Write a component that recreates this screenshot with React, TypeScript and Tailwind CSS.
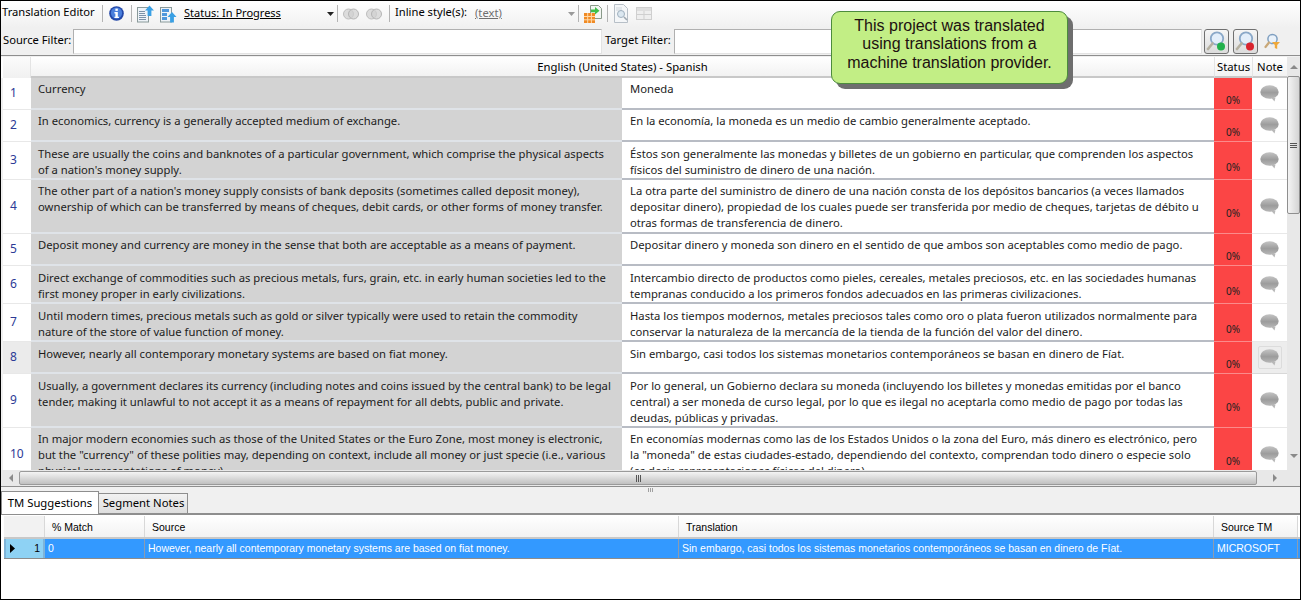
const font = "font-['Noto_Sans','Open_Sans',sans-serif]"

const rows = [
  { n: 1, h: "h-[32px]", pad: "pt-[3px]", source: ["Currency"], target: ["Moneda"] },
  { n: 2, h: "h-[32px]", pad: "pt-[3px]", source: ["In economics, currency is a generally accepted medium of exchange."], target: ["En la economía, la moneda es un medio de cambio generalmente aceptado."] },
  { n: 3, h: "h-[38px]", pad: "pt-[4px]", source: ["These are usually the coins and banknotes of a particular government, which comprise the physical aspects", "of a nation's money supply."], target: ["Éstos son generalmente las monedas y billetes de un gobierno en particular, que comprenden los aspectos", "físicos del suministro de dinero de una nación."] },
  { n: 4, h: "h-[54px]", pad: "pt-[3px]", source: ["The other part of a nation's money supply consists of bank deposits (sometimes called deposit money),", "ownership of which can be transferred by means of cheques, debit cards, or other forms of money transfer."], target: ["La otra parte del suministro de dinero de una nación consta de los depósitos bancarios (a veces llamados", "depositar dinero), propiedad de los cuales puede ser transferida por medio de cheques, tarjetas de débito u", "otras formas de transferencia de dinero."] },
  { n: 5, h: "h-[32px]", pad: "pt-[3px]", source: ["Deposit money and currency are money in the sense that both are acceptable as a means of payment."], target: ["Depositar dinero y moneda son dinero en el sentido de que ambos son aceptables como medio de pago."] },
  { n: 6, h: "h-[38px]", pad: "pt-[4px]", source: ["Direct exchange of commodities such as precious metals, furs, grain, etc. in early human societies led to the", "first money proper in early civilizations."], target: ["Intercambio directo de productos como pieles, cereales, metales preciosos, etc. en las sociedades humanas", "tempranas conducido a los primeros fondos adecuados en las primeras civilizaciones."] },
  { n: 7, h: "h-[38px]", pad: "pt-[4px]", source: ["Until modern times, precious metals such as gold or silver typically were used to retain the commodity", "nature of the store of value function of money."], target: ["Hasta los tiempos modernos, metales preciosos tales como oro o plata fueron utilizados normalmente para", "conservar la naturaleza de la mercancía de la tienda de la función del valor del dinero."] },
  { n: 8, h: "h-[32px]", pad: "pt-[4px]", source: ["However, nearly all contemporary monetary systems are based on fiat money."], target: ["Sin embargo, casi todos los sistemas monetarios contemporáneos se basan en dinero de Fíat."] },
  { n: 9, h: "h-[54px]", pad: "pt-[4px]", source: ["Usually, a government declares its currency (including notes and coins issued by the central bank) to be legal", "tender, making it unlawful to not accept it as a means of repayment for all debts, public and private."], target: ["Por lo general, un Gobierno declara su moneda (incluyendo los billetes y monedas emitidas por el banco", "central) a ser moneda de curso legal, por lo que es ilegal no aceptarla como medio de pago por todas las", "deudas, públicas y privadas."] },
  { n: 10, h: "h-[54px]", pad: "pt-[3px]", source: ["In major modern economies such as those of the United States or the Euro Zone, most money is electronic,", "but the \"currency\" of these polities may, depending on context, include all money or just specie (i.e., various", "physical representations of money)."], target: ["En economías modernas como las de los Estados Unidos o la zona del Euro, más dinero es electrónico, pero", "la \"moneda\" de estas ciudades-estado, dependiendo del contexto, comprendan todo dinero o especie solo", "(es decir, representaciones físicas del dinero)."] },
]

function InfoIcon() {
  return (
    <svg width="15" height="15" viewBox="0 0 16 16">
      <circle cx="8" cy="8" r="7.8" fill="#2448a8" />
      <circle cx="8" cy="7.5" r="6" fill="#4a7fdc" />
      <rect x="6.8" y="2.800" width="2.600" height="2.400" fill="#fff" />
      <path d="M5.800 6.500h3.600v5h1.200v1.400H5.800v-1.400h1v-3.600h-1z" fill="#fff" />
    </svg>
  )
}

function DocUpIcon({ blocks }: { blocks?: boolean }) {
  return (
    <svg width="17" height="18" viewBox="0 0 17 18">
      <rect x="0.5" y="2.500" width="11" height="14.500" fill="#eef3f8" stroke="#8a9a9a" />
      {blocks ? (
        <>
          <rect x="2" y="4" width="7" height="3" fill="#4f97dc" />
          <rect x="2" y="8" width="5" height="3" fill="#4f97dc" />
          <rect x="2" y="12" width="5" height="3" fill="#4f97dc" />
        </>
      ) : (
        <path d="M2 6.500h6M2 8.500h6M2 10.500h7M2 12.500h7M2 14.500h7" stroke="#7d93a8" />
      )}
      <path d="M12.500 0.500l4.500 5h-2.600v5.500h-3.800V5.500H8z" transform={blocks ? "translate(-.5 6.500)" : undefined} fill="#3aa0e4" />
    </svg>
  )
}

function RingsIcon() {
  return (
    <svg width="16" height="12" viewBox="0 0 16 12">
      <circle cx="5.500" cy="6" r="5" fill="#dcdcdc" stroke="#bdbdbd" />
      <circle cx="10.500" cy="6" r="5" fill="#d0d0d0" fillOpacity="0.7" stroke="#b5b5b5" />
    </svg>
  )
}

function ExportIcon() {
  return (
    <svg width="18" height="18" viewBox="0 0 18 18">
      <path d="M6.500 0.500h8l3 3v10h-11z" fill="#f3f6f3" stroke="#8a9a8a" />
      <rect x="0" y="8" width="11" height="10" fill="#f08a24" />
      <path d="M0 11.500h11M0 14.800h11M3.700 8v10M7.400 8v10" stroke="#ffd9a8" />
      <path d="M7 4.500h4V2l4.500 3.800L11 9.500V7.200H7z" fill="#3fbf4a" />
    </svg>
  )
}

function PreviewIcon() {
  return (
    <svg width="15" height="19" viewBox="0 0 15 19">
      <path d="M0.500 0.500h9l4 4v14h-13z" fill="#f4f6f8" stroke="#b7bfc7" />
      <path d="M2 4h6M2 6h6" stroke="#cfd6dc" />
      <circle cx="7" cy="10" r="3.500" fill="#dbe7f0" stroke="#9fb0be" />
      <path d="M10 13l3 3" stroke="#9fa8b0" strokeWidth="1.600" />
    </svg>
  )
}

function GridIcon() {
  return (
    <svg width="16" height="14" viewBox="0 0 16 14">
      <rect x="0.500" y="0.500" width="15" height="12" fill="#eeeeee" stroke="#cfcfcf" />
      <rect x="1" y="1" width="14" height="3" fill="#dedede" />
      <path d="M1 7.500h14M8 4v9" stroke="#cfcfcf" />
    </svg>
  )
}

function FindIcon({ dot }: { dot: string }) {
  return (
    <svg width="21" height="21" viewBox="0 0 21 21">
      <circle cx="11" cy="7.500" r="6.200" fill="#e3eefa" stroke="#8aa8c8" strokeWidth="1.800" />
      <path d="M6.500 12.500L2 18" stroke="#b5b0a0" strokeWidth="2.600" strokeLinecap="round" />
      <circle cx="15" cy="15.500" r="4" fill={dot} />
    </svg>
  )
}

function FilterFindIcon() {
  return (
    <svg width="17" height="17" viewBox="0 0 17 17">
      <circle cx="8.500" cy="6" r="4.600" fill="#eaf2fa" stroke="#7f9fc0" strokeWidth="1.500" />
      <path d="M5 9.500L1.500 14" stroke="#c9a878" strokeWidth="2.200" strokeLinecap="round" />
      <path d="M8 9h8l-2.800 3v4l-2.400-1v-3z" fill="#efa83a" />
    </svg>
  )
}

function NoteBubble() {
  return (
    <svg width="19" height="17" viewBox="0 0 19 17">
      <defs>
        <linearGradient id="bubble" x1="0" y1="0" x2="0" y2="1">
          <stop offset="0" stopColor="#c4c4c4" />
          <stop offset="0.55" stopColor="#9c9c9c" />
          <stop offset="1" stopColor="#b8b8b8" />
        </linearGradient>
      </defs>
      <ellipse cx="9.500" cy="7" rx="9.200" ry="6.800" fill="url(#bubble)" />
      <path d="M11 12.500h4.500l-1 4z" fill="#b8b8b8" />
    </svg>
  )
}

function Sep({ className }: { className: string }) {
  return <div className={`h-[17px] w-px bg-[#b4b4b4] ${className}`} />
}

function ScrollArrow({ dir }: { dir: "up" | "down" | "left" | "right" }) {
  const paths = { up: "M0 4l4-4 4 4z", down: "M0 0l4 4 4-4z", left: "M4 0L0 4l4 4z", right: "M0 0l4 4-4 4z" }
  const box = dir === "up" || dir === "down" ? "0 0 8 4" : "0 0 4 8"
  const size = dir === "up" || dir === "down" ? { width: 8, height: 4 } : { width: 4, height: 8 }
  return (
    <svg {...size} viewBox={box}>
      <path d={paths[dir]} fill="#8a8a8a" />
    </svg>
  )
}

function Toolbar() {
  return (
    <div className="flex h-[27px] shrink-0 items-center whitespace-nowrap bg-gradient-to-b from-white to-[#f0f0f0] pb-[2px] pl-[1px] text-[11.2px] text-black">
      <span className="w-[100px] pb-[2px]">Translation Editor</span>
      <Sep className="" />
      <div className="ml-[6px]"><InfoIcon /></div>
      <Sep className="ml-[7px]" />
      <div className="ml-[5px] flex gap-[6px]">
        <DocUpIcon />
        <DocUpIcon blocks />
      </div>
      <span className="ml-[7px] w-[143px] text-[11px] underline">Status: In Progress</span>
      <svg width="7" height="4" viewBox="0 0 7 4"><path d="M0 0h7L3.500 4z" fill="#222" /></svg>
      <Sep className="ml-[3px]" />
      <div className="ml-[5px] flex gap-[7px]">
        <RingsIcon />
        <RingsIcon />
      </div>
      <Sep className="ml-[7px]" />
      <span className="ml-[5px] w-[80px] pb-[2px]">Inline style(s):</span>
      <span className="w-[93px] text-[#6f6f6f] underline">(text)</span>
      <svg width="7" height="4" viewBox="0 0 7 4"><path d="M0 0h7L3.500 4z" fill="#9a9a9a" /></svg>
      <Sep className="ml-[3px]" />
      <div className="ml-[5px]"><ExportIcon /></div>
      <Sep className="ml-[5px]" />
      <div className="ml-[6px]"><PreviewIcon /></div>
      <div className="ml-[7px]"><GridIcon /></div>
    </div>
  )
}

function FilterRow() {
  return (
    <div className="flex h-[27px] shrink-0 items-center whitespace-nowrap bg-[#f0f0f0] pl-[2px] text-[11.2px] text-black">
      <span className="w-[70px] pb-[2px]">Source Filter:</span>
      <div className="h-[25px] w-[529px] border border-[#b0b0b0] border-r-[#e3e3e3] border-b-[#e3e3e3] bg-white" />
      <span className="ml-[3px] w-[69px] pb-[2px]">Target Filter:</span>
      <div className="h-[25px] w-[528px] border border-[#b0b0b0] border-r-[#e3e3e3] border-b-[#e3e3e3] bg-white" />
      <div className="ml-[2px] flex h-[25px] w-[25px] items-center justify-center rounded-[3px] border border-[#707070] bg-gradient-to-b from-[#f6f6f6] to-[#dcdcdc]">
        <FindIcon dot="#22b14c" />
      </div>
      <div className="ml-[4px] flex h-[25px] w-[25px] items-center justify-center rounded-[3px] border border-[#707070] bg-gradient-to-b from-[#f6f6f6] to-[#dcdcdc]">
        <FindIcon dot="#d9232e" />
      </div>
      <div className="ml-[6px]"><FilterFindIcon /></div>
    </div>
  )
}

function GridHeader() {
  return (
    <div className="flex h-[21px] shrink-0 bg-white pl-[2px] text-[11.3px] text-black">
      <div className="w-[28px] border-r border-[#e4e4e4] bg-gradient-to-b from-[#fbfbfb] to-[#f1f1f1]" />
      <div className="flex w-[1183px] items-center justify-center border-b-2 border-[#c8c8c8] bg-gradient-to-b from-white to-[#f2f2f2] pt-[2px]">
        English (United States) - Spanish
      </div>
      <div className="flex w-[38px] items-center justify-center border-b-2 border-l border-[#c8c8c8] border-l-[#e4e4e4] bg-gradient-to-b from-white to-[#f2f2f2] pt-[2px]">
        Status
      </div>
      <div className="flex w-[35px] items-center justify-center whitespace-nowrap border-b-2 border-l border-[#c8c8c8] border-l-[#e4e4e4] bg-gradient-to-b from-white to-[#f2f2f2] pt-[2px]">
        Note
      </div>
    </div>
  )
}

function SegmentRow({ row }: { row: (typeof rows)[number] }) {
  const selected = row.n === 8
  return (
    <div className={`flex ${row.h} shrink-0 pl-[2px] text-[11.25px] leading-[16px] text-[#1c1c1c]`}>
      <div className={`flex w-[28px] items-center border-b border-[#e8e8e8] pb-[1px] pl-[7px] text-[12px] text-[#2c3a96] ${selected ? "bg-[#ebebeb]" : "bg-white"}`}>
        {row.n}
      </div>
      <div className={`w-[591px] border-b-2 border-[#dfe3e8] bg-[#d3d3d3] pl-[7px] ${row.pad}`}>
        {row.source.map((line) => (
          <div key={line} className="whitespace-nowrap">{line}</div>
        ))}
      </div>
      <div className={`w-[592px] border-b-2 border-[#b8bcc4] bg-white pl-[8px] ${row.pad}`}>
        {row.target.map((line) => (
          <div key={line} className="whitespace-nowrap">{line}</div>
        ))}
      </div>
      <div className="flex w-[38px] items-center justify-center border-b border-[#fb8a8a] bg-[#fb4545] pt-[12px] text-[10px] text-[#222]">
        0%
      </div>
      <div className={`flex w-[35px] items-center justify-center border-b pb-[1px] ${selected ? "border-[#d8d8d8] bg-[#ededed]" : "border-[#e8e8e8] bg-white"}`}>
        {selected ? (
          <div className="flex h-[23px] w-[24px] items-center justify-center rounded-[2px] border border-[#dcdcdc]">
            <NoteBubble />
          </div>
        ) : (
          <NoteBubble />
        )}
      </div>
    </div>
  )
}

function VerticalScrollbar() {
  return (
    <div className="flex w-[13px] flex-col items-center bg-[#e8e8e8]">
      <div className="flex h-[19px] items-center"><ScrollArrow dir="up" /></div>
      <div className="flex h-[138px] w-[13px] flex-col items-center justify-center gap-[1px] rounded-[2px] border border-[#8f8f8f] bg-gradient-to-r from-[#f4f4f4] to-[#d4d4d4]">
        <div className="h-px w-[7px] bg-[#555]" />
        <div className="h-px w-[7px] bg-[#555]" />
        <div className="h-px w-[7px] bg-[#555]" />
      </div>
      <div className="flex-1" />
      <div className="mb-[6px] flex h-[16px] items-center"><ScrollArrow dir="down" /></div>
    </div>
  )
}

function HorizontalScrollbar() {
  return (
    <div className="flex h-[16px] shrink-0 items-center bg-[#e8e8e8] pl-[2px]">
      <div className="flex w-[16px] justify-center"><ScrollArrow dir="left" /></div>
      <div className="flex h-[14px] w-[1238px] items-center justify-center rounded-[2px] border border-[#9a9a9a] bg-gradient-to-b from-[#f4f4f4] to-[#c0c0c0]">
        <div className="flex gap-[1px]">
          <div className="h-[7px] w-px bg-[#555]" />
          <div className="h-[7px] w-px bg-[#555]" />
          <div className="h-[7px] w-px bg-[#555]" />
        </div>
      </div>
      <div className="flex w-[36px] justify-center"><ScrollArrow dir="right" /></div>
    </div>
  )
}

function Tabs() {
  return (
    <div className="flex h-[23px] shrink-0 items-end border-b-2 border-[#8e8e8e] bg-[#f0f0f0] text-[11.3px] text-black">
      <div className="relative top-[1px] flex h-[23px] w-[98px] items-center justify-center whitespace-nowrap border border-b-0 border-[#8e8e8e] bg-white">
        TM Suggestions
      </div>
      <div className="flex h-[20px] w-[89px] items-center justify-center whitespace-nowrap border border-b-0 border-l-0 border-[#8e8e8e] bg-gradient-to-b from-[#f2f2f2] to-[#dedede] pl-[1px]">
        Segment Notes
      </div>
    </div>
  )
}

function TmGrid() {
  const headers = [
    { label: "% Match", w: "w-[100px]" },
    { label: "Source", w: "w-[534px]" },
    { label: "Translation", w: "w-[535px]" },
    { label: "Source TM", w: "w-[84px]" },
  ]
  const cells = [
    { text: "0", w: "w-[100px]" },
    { text: "However, nearly all contemporary monetary systems are based on fiat money.", w: "w-[534px]" },
    { text: "Sin embargo, casi todos los sistemas monetarios contemporáneos se basan en dinero de Fíat.", w: "w-[535px]" },
    { text: "MICROSOFT", w: "w-[84px]" },
  ]
  return (
    <div className="min-h-0 flex-1 bg-white pl-[3px] font-['Liberation_Sans',sans-serif] text-[10.5px]">
      <div className="flex h-[24px] border-b-2 border-[#c8c8c8] pt-[1px] text-black">
        <div className="w-[41px] border-r border-[#d8d8d8] bg-[#f2f2f2]" />
        {headers.map((h) => (
          <div key={h.label} className={`${h.w} flex items-center border-r border-[#d8d8d8] bg-gradient-to-b from-white to-[#f2f2f2] pl-[7px] pt-[2px]`}>
            {h.label}
          </div>
        ))}
      </div>
      <div className="flex h-[20px] border-b border-[#8c8c8c] bg-[#3399ff] text-white">
        <div className="flex w-[41px] items-center justify-between border-x-2 border-[#7fb4d8] bg-[#8ed2f4] pl-[4px] pr-[3px] text-black">
          <svg width="5" height="9" viewBox="0 0 5 9"><path d="M0 0l5 4.500L0 9z" fill="#000" /></svg>
          <span>1</span>
        </div>
        {cells.map((c) => (
          <div key={c.text} className={`${c.w} flex items-center whitespace-nowrap border-r border-[#8c9cb0] pl-[3px] pt-[1px]`}>
            {c.text}
          </div>
        ))}
      </div>
    </div>
  )
}

export default function App() {
  return (
    <div className={`relative flex h-[600px] w-[1301px] flex-col overflow-hidden border border-black bg-[#f0f0f0] ${font}`}>
      <Toolbar />
      <FilterRow />
      <div className="h-[2px] shrink-0 border-t border-[#8e8e8e] bg-[#f0f0f0]" />
      <div className="flex h-[413px] shrink-0 bg-[#f0f0f0]">
        <div className="flex w-[1286px] flex-col overflow-hidden">
          <GridHeader />
          {rows.map((row) => (
            <SegmentRow key={row.n} row={row} />
          ))}
        </div>
        <VerticalScrollbar />
      </div>
      <HorizontalScrollbar />
      <div className="flex h-[6px] shrink-0 items-center justify-center gap-[1px] border-t border-[#8e8e8e] bg-[#f0f0f0]">
        <div className="h-[4px] w-px bg-[#a0a0a0]" />
        <div className="h-[4px] w-px bg-[#a0a0a0]" />
        <div className="h-[4px] w-px bg-[#a0a0a0]" />
      </div>
      <Tabs />
      <TmGrid />
      <div className="absolute left-[830px] top-[10px] flex h-[73px] w-[237px] items-center justify-center rounded-[9px] border border-[#4c8c3c] bg-[#c2ee85] pb-[6px] text-center font-['Liberation_Sans',sans-serif] text-[16px] leading-[18.5px] text-[#201010] shadow-[5px_5px_0_#6e6e6e]">
        <div>
          This project was translated
          <br />
          using translations from a
          <br />
          machine translation provider.
        </div>
      </div>
    </div>
  )
}
